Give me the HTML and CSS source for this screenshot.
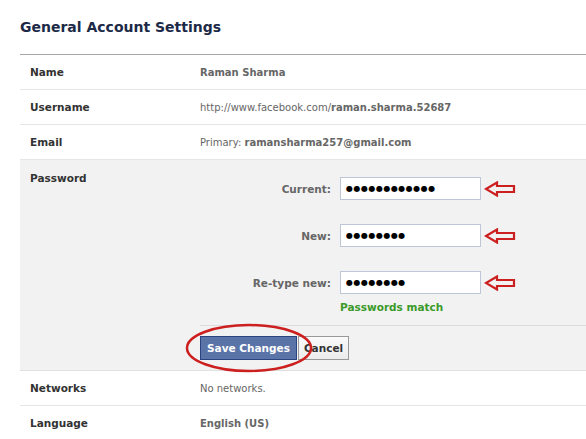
FILE: index.html
```html
<!DOCTYPE html>
<html>
<head>
<meta charset="utf-8">
<link rel="stylesheet" href="styles.css">
</head>
<body>
<div class="page">
  <h1 class="title">General Account Settings</h1>
  <div class="row">
    <div class="label">Name</div>
    <div class="value strong">Raman Sharma</div>
  </div>
  <div class="row">
    <div class="label">Username</div>
    <div class="value">http://www.facebook.com/<b>raman.sharma.52687</b></div>
  </div>
  <div class="row">
    <div class="label">Email</div>
    <div class="value">Primary: <b>ramansharma257@gmail.com</b></div>
  </div>
  <div class="row row-edit">
    <div class="label label-top">Password</div>
    <div class="edit">
      <div class="fields">
        <label class="flabel">Current:</label>
        <div class="input">●●●●●●●●●●●●</div>
        <svg class="arrow" width="34" height="16" viewBox="0 0 34 16"><path d="M2 8 L13 1.5 L13 5 L30 5 L30 11 L13 11 L13 14.5 Z" fill="none" stroke="#cc1f1f" stroke-width="2.2" stroke-linejoin="miter"/></svg>
        <label class="flabel">New:</label>
        <div class="input">●●●●●●●●</div>
        <svg class="arrow" width="34" height="16" viewBox="0 0 34 16"><path d="M2 8 L13 1.5 L13 5 L30 5 L30 11 L13 11 L13 14.5 Z" fill="none" stroke="#cc1f1f" stroke-width="2.2" stroke-linejoin="miter"/></svg>
        <label class="flabel">Re-type new:</label>
        <div class="input">●●●●●●●●</div>
        <svg class="arrow" width="34" height="16" viewBox="0 0 34 16"><path d="M2 8 L13 1.5 L13 5 L30 5 L30 11 L13 11 L13 14.5 Z" fill="none" stroke="#cc1f1f" stroke-width="2.2" stroke-linejoin="miter"/></svg>
      </div>
      <div class="match">Passwords match</div>
      <div class="actions">
        <button class="btn btn-primary">Save Changes</button><button class="btn btn-cancel">Cancel</button>
        <svg class="circle" width="130" height="52" viewBox="0 0 130 52"><ellipse cx="65" cy="26" rx="62" ry="23" fill="none" stroke="#cc1f1f" stroke-width="2.5"/></svg>
      </div>
    </div>
  </div>
  <div class="row">
    <div class="label">Networks</div>
    <div class="value">No networks.</div>
  </div>
  <div class="row row-last">
    <div class="label">Language</div>
    <div class="value strong">English (US)</div>
  </div>
</div>
</body>
</html>
```

FILE: styles.css
```css
html, body {
  margin: 0;
  background: #fff;
}
body {
  font-family: "DejaVu Sans", Tahoma, sans-serif;
  font-size: 10.5px;
  color: #333;
}
.page {
  padding-left: 20px;
}
.title {
  margin: 0;
  box-sizing: border-box;
  height: 55px;
  padding-top: 19px;
  font-size: 14px;
  font-weight: bold;
  color: #1c2a47;
  border-bottom: 1px solid #a6a6a6;
}
.row {
  display: grid;
  grid-template-columns: 180px 1fr;
  align-items: center;
  height: 34px;
  border-bottom: 1px solid #e6e6e6;
}
.row-last {
  border-bottom: none;
}
.label {
  padding-left: 10px;
  font-weight: bold;
  color: #333;
}
.value {
  color: #666;
  font-size: 10px;
}
.value b, .strong {
  font-weight: bold;
}
.row-edit {
  height: auto;
  align-items: start;
  background: #f2f2f2;
  border-bottom: 1px solid #e0e0e0;
}
.label-top {
  padding-top: 12px;
}
.edit {
  padding-top: 17px;
  position: relative;
}
.fields {
  display: grid;
  grid-template-columns: 131px 141px auto;
  column-gap: 9px;
  row-gap: 24px;
  align-items: center;
}
.flabel {
  text-align: right;
  font-weight: bold;
  color: #666;
}
.input {
  box-sizing: border-box;
  height: 23px;
  border: 1px solid #bdc7d8;
  background: #fff;
  padding-left: 5px;
  font-size: 8px;
  letter-spacing: 0.5px;
  line-height: 21px;
  color: #000;
}
.arrow {
  display: block;
  margin-left: -6px;
}
.match {
  margin-left: 140px;
  margin-top: 7px;
  height: 13px;
  line-height: 13px;
  font-weight: bold;
  color: #3b9a2a;
}
.actions {
  position: relative;
  margin-top: 11px;
  border-top: 1px solid #ddd;
  padding: 10px 0 10px 0;
  display: flex;
}
.btn {
  font-family: inherit;
  font-size: 10.5px;
  font-weight: bold;
  height: 24px;
  margin: 0;
  padding: 0;
  cursor: pointer;
}
.btn-primary {
  width: 97px;
  background: #5b74a8;
  border: 1px solid #29447e;
  color: #fff;
}
.btn-cancel {
  width: 51px;
  background: linear-gradient(#fafafa, #ececec);
  border: 1px solid #999;
  color: #333;
  margin-left: 1px;
}
.circle {
  position: absolute;
  left: -16px;
  top: -4px;
}
```
